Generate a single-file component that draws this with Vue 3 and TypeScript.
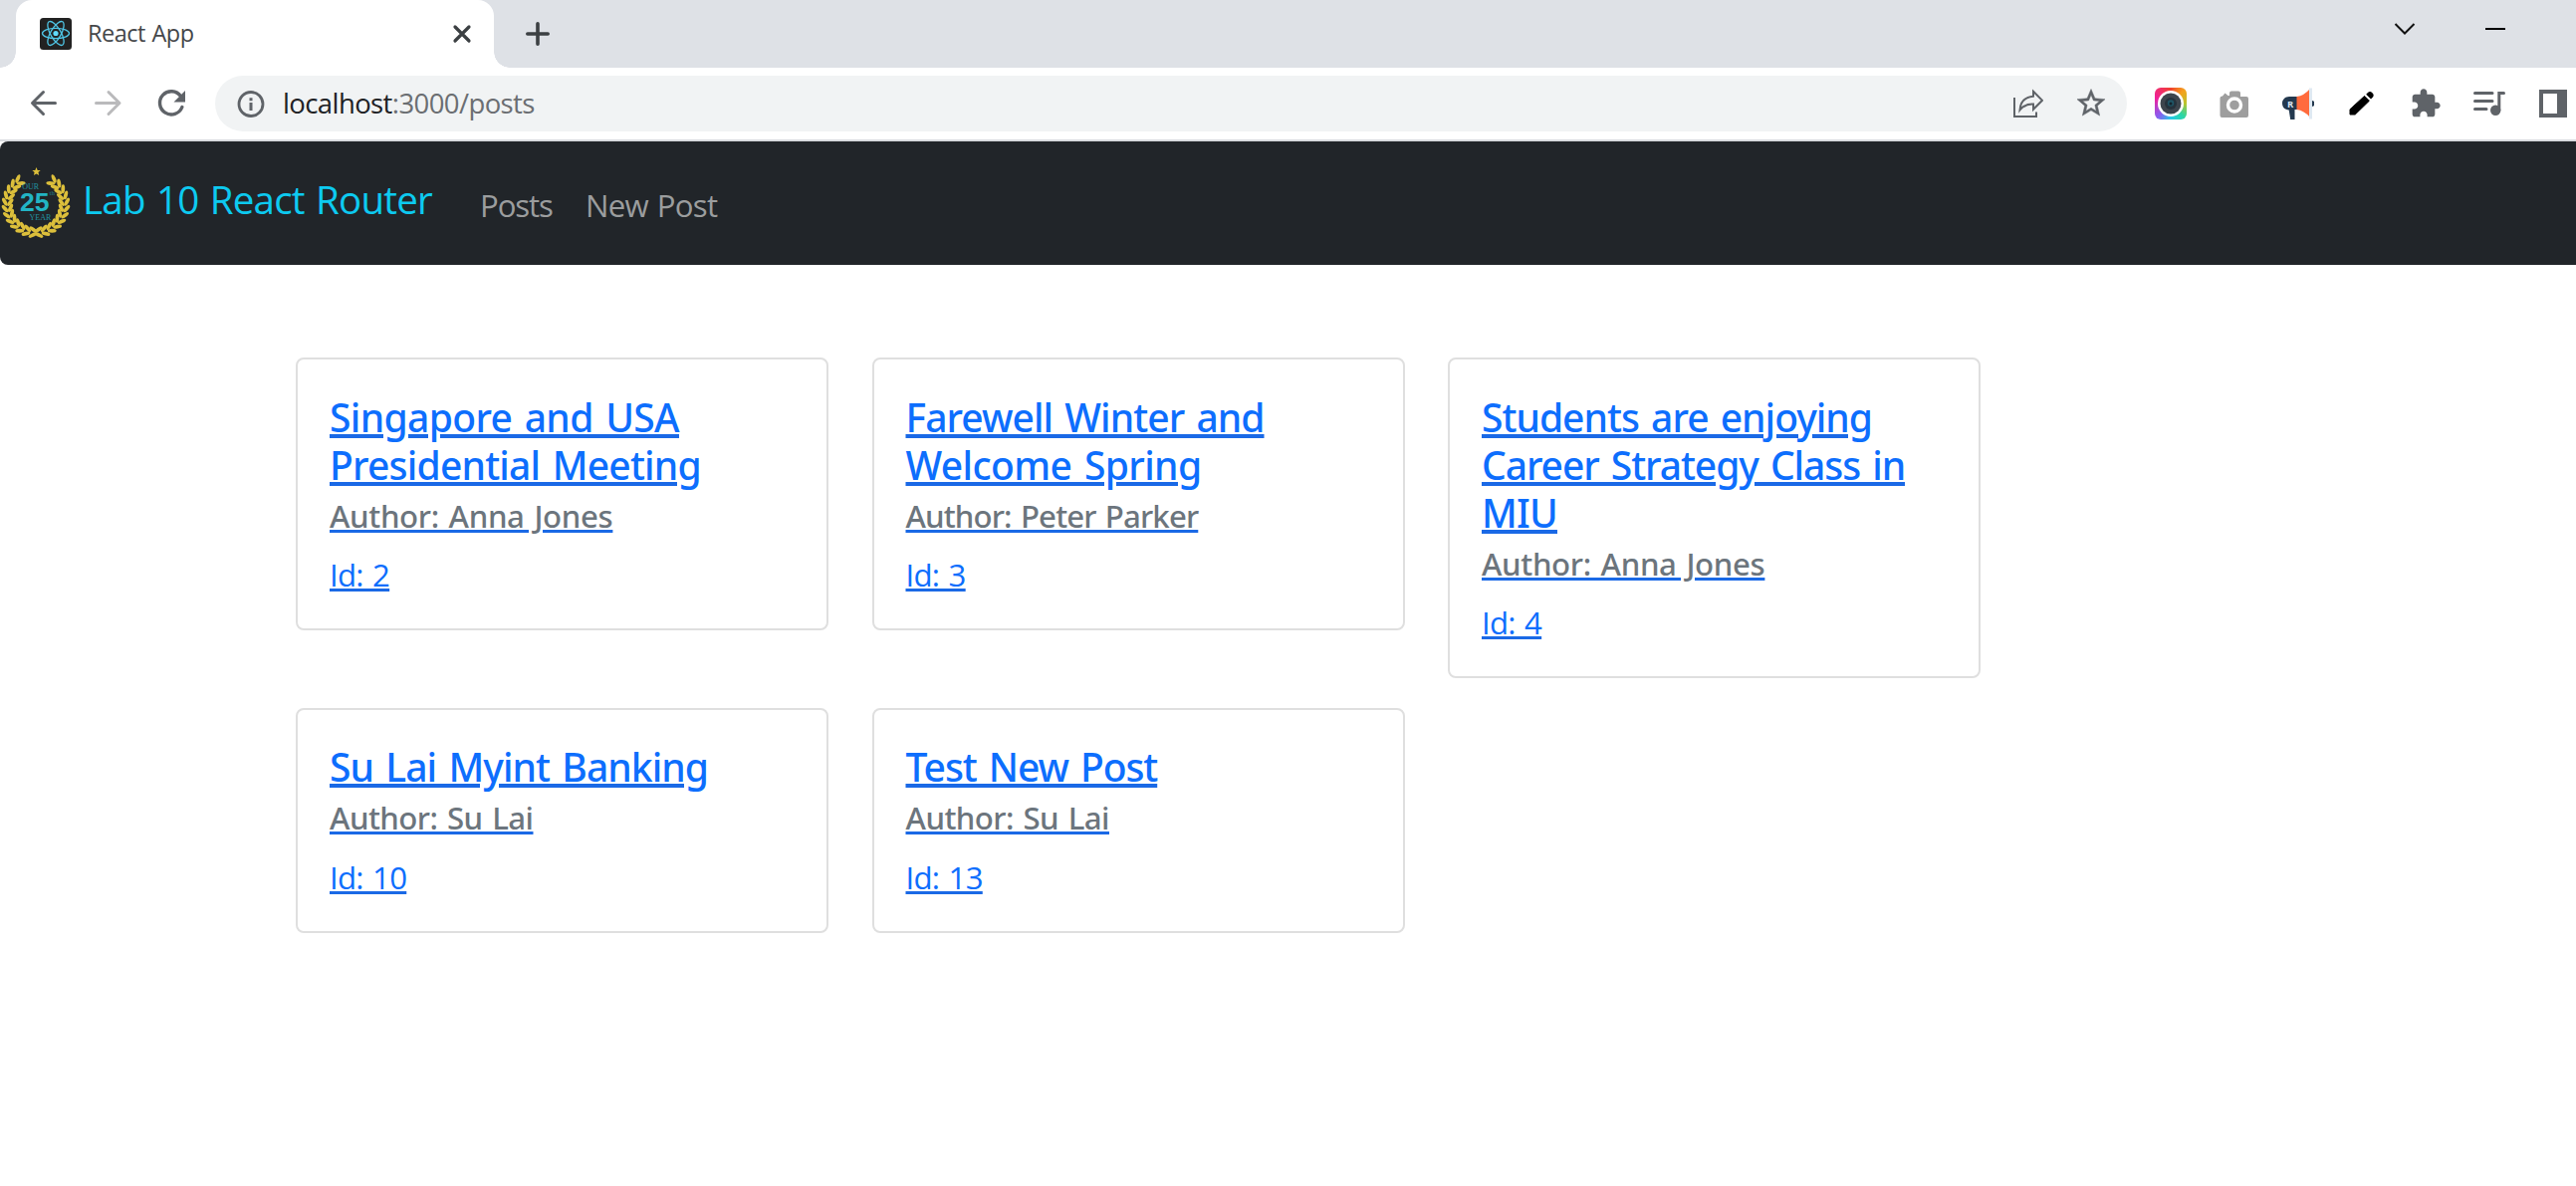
<script setup lang="ts">
interface Line {
  text: string
  tracking: number
}

interface Post {
  id: number
  title: Line[]
  author: Line
}

const posts: Post[] = [
  {
    id: 2,
    title: [
      { text: 'Singapore and USA', tracking: -0.65 },
      { text: 'Presidential Meeting', tracking: -0.78 },
    ],
    author: { text: 'Anna Jones', tracking: -0.34 },
  },
  {
    id: 3,
    title: [
      { text: 'Farewell Winter and', tracking: -0.94 },
      { text: 'Welcome Spring', tracking: -0.61 },
    ],
    author: { text: 'Peter Parker', tracking: -0.86 },
  },
  {
    id: 4,
    title: [
      { text: 'Students are enjoying', tracking: -0.98 },
      { text: 'Career Strategy Class in', tracking: -1.06 },
      { text: 'MIU', tracking: -0.8 },
    ],
    author: { text: 'Anna Jones', tracking: -0.34 },
  },
  {
    id: 10,
    title: [{ text: 'Su Lai Myint Banking', tracking: -0.92 }],
    author: { text: 'Su Lai', tracking: -0.54 },
  },
  {
    id: 13,
    title: [{ text: 'Test New Post', tracking: -1.07 }],
    author: { text: 'Su Lai', tracking: -0.54 },
  },
]

// Laurel wreath: pairs of leaves that climb both sides of a circle.
const leaves: string[] = []
for (let i = 0; i < 12; i++) {
  const deg = 84 - i * 12.6
  const rad = (deg * Math.PI) / 180
  for (const side of [1, -1]) {
    for (const lean of [1, -1]) {
      const r = 28.5 + lean * 2.8
      const x = 36 + side * r * Math.cos(rad)
      const y = 37 + r * Math.sin(rad)
      const dir = deg - 90 + lean * 32
      const angle = side === 1 ? dir : 180 - dir
      leaves.push(`translate(${x.toFixed(2)} ${y.toFixed(2)}) rotate(${angle.toFixed(1)})`)
    }
  }
}
</script>

<template>
  <div class="window">
    <div class="tabstrip">
      <div class="tab">
        <svg class="favicon" viewBox="0 0 32 32">
          <rect width="32" height="32" rx="3.5" fill="#222" />
          <g fill="none" stroke="#4fc4e4" stroke-width="1.3">
            <ellipse cx="16" cy="15.5" rx="13.5" ry="5.2" />
            <ellipse cx="16" cy="15.5" rx="13.5" ry="5.2" transform="rotate(60 16 15.5)" />
            <ellipse cx="16" cy="15.5" rx="13.5" ry="5.2" transform="rotate(120 16 15.5)" />
          </g>
          <circle cx="16" cy="15.5" r="2.6" fill="#61dafb" />
        </svg>
        <span class="tab-title">React App</span>
        <svg class="close" viewBox="0 0 20 20">
          <path d="M3 3l14 14M17 3L3 17" stroke="#3c4043" stroke-width="3.2" stroke-linecap="round" />
        </svg>
        <i class="foot"></i>
      </div>
      <svg class="plus" viewBox="0 0 24 24">
        <path d="M12 1.8v20.4M1.8 12h20.4" stroke="#3c4043" stroke-width="3.6" stroke-linecap="round" />
      </svg>
      <svg class="chevron" viewBox="0 0 22 12">
        <path d="M1.5 1l9.5 9.5L20.5 1" fill="none" stroke="#111" stroke-width="2" />
      </svg>
      <span class="minimize"></span>
    </div>

    <div class="toolbar">
      <div class="controls">
        <svg viewBox="0 0 32 32">
          <path d="M27.5 15.5H5M15.500 4.500l-11 11 11 11" class="arrow" />
        </svg>
        <svg viewBox="0 0 32 32">
          <path d="M4.500 15.500h23M17 4.500l11 11-11 11" class="arrow off" />
        </svg>
        <svg viewBox="0 0 32 32">
          <path d="M25.5 8.500a11.600 11.600 0 1 0 1.400 11" fill="none" stroke="#5f6368" stroke-width="3.400" stroke-linecap="round" />
          <path d="M30 3v11.500H18.500z" fill="#5f6368" />
        </svg>
      </div>
      <div class="omnibox">
        <svg viewBox="0 0 32 32">
          <circle cx="16" cy="16.5" r="12" fill="none" stroke="#5f6368" stroke-width="2.8" />
          <path d="M14.500 15h3v8h-3zM14.500 10.300h3v3h-3z" fill="#5f6368" />
        </svg>
        <span class="url"><b>localhost</b>:3000/posts</span>
        <svg class="share" viewBox="0 0 32 32">
          <g fill="none" stroke="#5f6368" stroke-width="2">
            <path d="M3 10v19h22v-4.5" />
            <path d="M22 3.800l9 9-9 9v-5.300c-6-.3-10 1.500-13.500 6C9 15 13 9.500 22 8.700z" />
          </g>
        </svg>
        <svg viewBox="0.57 0.93 22.86 22.86">
          <path
            fill="#5f6368"
            stroke="#5f6368"
            stroke-width="0.35"
            d="M22 9.240l-7.190-.62L12 2 9.190 8.630 2 9.240l5.460 4.730L5.820 21 12 17.270 18.180 21l-1.630-7.030L22 9.240zM12 15.400l-3.760 2.270 1-4.280-3.320-2.880 4.380-.38L12 6.100l1.710 4.040 4.380.38-3.320 2.880 1 4.280L12 15.400z"
          />
        </svg>
      </div>
      <div class="extensions">
        <span class="lens">
          <svg viewBox="0 0 32 32">
            <circle cx="16" cy="16" r="13" fill="#fff" />
            <circle cx="16" cy="16" r="10.5" fill="#3d454d" />
            <circle cx="16" cy="16" r="6" fill="#26323c" />
            <circle cx="16" cy="15.5" r="3.2" fill="#1f5566" />
            <circle cx="16" cy="16" r="1.5" fill="#15222b" />
          </svg>
        </span>
        <svg viewBox="0 0 32 32">
          <path fill="#9e9e9e" d="M4 8.500l2.500-3 3 2.500h1.500V5.500q0-2 2-2h7q2 0 2 2V9h6q2 0 2 2v17q0 2-2 2H3.500q-2 0-2-2V10.500q0-2 2.500-2z" />
          <circle cx="16" cy="17.500" r="6.500" fill="none" stroke="#fff" stroke-width="3.400" />
        </svg>
        <svg viewBox="0 0 32 32">
          <path fill="#24394f" d="M15 9v13h-2.500v10H8.200l-1.500-9.500C2.500 22 0 19.500 0 15.700S3 9 7 9z" />
          <circle cx="29.500" cy="16" r="3" fill="#24394f" />
          <path fill="#ff6b3d" d="M14.500 9Q22 8 27.500 1.500v28Q22 23 14.500 22z" />
          <path fill="#dfe9f2" d="M27 .5h3v31h-3z" />
          <text x="5" y="19.8" class="badge-letter">R</text>
        </svg>
        <svg viewBox="0 0 32 32">
          <path d="M4 27v-5.200L18.600 8.400l4.800 4.800L9.200 27z" stroke="#000" stroke-linejoin="round" />
          <path d="M20.200 6.800l2-2q2-1.700 4.200.4t.6 4.200l-2 2.200z" />
        </svg>
        <svg viewBox="0 0 24 24">
          <path
            fill="#5f6368"
            d="M20.500 11H19V7c0-1.100-.9-2-2-2h-4V3.500C13 2.120 11.880 1 10.500 1S8 2.120 8 3.500V5H4c-1.100 0-1.990.9-1.990 2v3.800H3.500c1.490 0 2.700 1.210 2.700 2.700s-1.210 2.700-2.700 2.700H2V20c0 1.100.9 2 2 2h3.800v-1.500c0-1.490 1.210-2.700 2.700-2.700 1.490 0 2.700 1.210 2.700 2.700V22H17c1.100 0 2-.9 2-2v-4h1.500c1.380 0 2.500-1.120 2.500-2.500S21.880 11 20.500 11z"
          />
        </svg>
        <svg viewBox="0 0 32 32">
          <path d="M1.500 5.500h17.500M1.500 13.500h17.500M1.500 21.500h11.500" stroke="#5f6368" stroke-width="3" stroke-linecap="round" />
          <path d="M25.800 23V5.500h4.700" fill="none" stroke="#5f6368" stroke-width="3" stroke-linecap="round" />
          <circle cx="22.2" cy="22.8" r="5.2" fill="#5f6368" />
        </svg>
        <svg viewBox="0 0 32 32">
          <path fill="#5f6368" fill-rule="evenodd" d="M2 2h28v28H2zM6 6v20h14V6z" />
        </svg>
      </div>
    </div>

    <nav class="navbar">
      <svg class="logo" viewBox="0 0 72 72">
        <g fill="#dcbf3b">
          <ellipse v-for="(t, i) in leaves" :key="i" :transform="t" rx="4.5" ry="1.9" />
          <path d="M36.500 0l1.200 2.900 3 .2-2.300 2 .8 3-2.700-1.600-2.600 1.600.7-3-2.300-2 3-.2z" />
        </g>
        <text x="22.3" y="21.5" class="small">OUR</text>
        <text x="20" y="44" class="years">25</text>
        <text x="49.5" y="27.500" class="th">th</text>
        <text x="29.5" y="52.500" class="small">YEAR</text>
      </svg>
      <span class="brand">Lab 10 React Router</span>
      <span class="link posts">Posts</span>
      <span class="link new">New Post</span>
    </nav>

    <main class="grid">
      <a v-for="post in posts" :key="post.id" class="card">
        <h5>
          <template v-for="(line, i) in post.title" :key="line.text">
            <br v-if="i > 0" /><span :style="{ letterSpacing: line.tracking + 'px' }">{{ line.text }}</span>
          </template>
        </h5>
        <h6 :style="{ letterSpacing: post.author.tracking + 'px' }">Author: {{ post.author.text }}</h6>
        <p>Id: {{ post.id }}</p>
      </a>
    </main>
  </div>
</template>

<style>
body {
  background: #fff;
}
</style>

<style scoped>
.window {
  height: 1191px;
  overflow: hidden;
  background: #fff;
  font-family: 'Open Sans', 'Noto Sans', sans-serif;
}
svg {
  display: block;
  flex: none;
}
.tabstrip {
  display: flex;
  align-items: center;
  height: 68px;
  background: #dee1e6;
}
.tab {
  position: relative;
  display: flex;
  align-items: center;
  box-sizing: border-box;
  width: 480px;
  height: 68px;
  margin-left: 16px;
  padding: 0 22px 0 24px;
  border-radius: 16px 16px 0 0;
  background: #fff;
}
.tab::before,
.foot {
  content: '';
  position: absolute;
  bottom: 0;
  width: 16px;
  height: 16px;
}
.tab::before {
  left: -16px;
  background: radial-gradient(circle at 0 0, transparent 15.5px, #fff 16px);
}
.foot {
  right: -16px;
  background: radial-gradient(circle at 100% 0, transparent 15.5px, #fff 16px);
}
.favicon {
  width: 32px;
  height: 32px;
}
.tab-title {
  margin: 0 0 2px 16px;
  font-size: 23.5px;
  letter-spacing: -0.5px;
  word-spacing: 1px;
  color: #45474a;
}
.close {
  width: 20px;
  height: 20px;
  margin-left: auto;
}
.plus {
  width: 24px;
  height: 24px;
  margin-left: 32px;
}
.chevron {
  width: 22px;
  height: 12px;
  margin: 0 0 10px auto;
}
.minimize {
  width: 20px;
  height: 2px;
  margin: 0 71px 10px 70px;
  background: #000;
}
.toolbar {
  display: flex;
  align-items: center;
  height: 72px;
  border-bottom: 2px solid #d9dbdf;
}
.toolbar svg {
  width: 32px;
  height: 32px;
}
.controls {
  display: flex;
  gap: 32px;
  padding-left: 28px;
}
.arrow {
  fill: none;
  stroke: #5f6368;
  stroke-width: 3;
  stroke-linecap: round;
  stroke-linejoin: round;
}
.arrow.off {
  stroke: #bababc;
}
.omnibox {
  display: flex;
  align-items: center;
  box-sizing: border-box;
  width: 1920px;
  height: 56px;
  margin: 0 28px;
  padding: 0 20px;
  border-radius: 28px;
  background: #f1f3f4;
}
.url {
  margin: 0 0 1px 16px;
  font-size: 27.5px;
  letter-spacing: -0.6px;
  color: #6b6e72;
}
.url b {
  font-weight: 400;
  color: #202124;
}
.share {
  margin: 0 32px 0 auto;
}
.extensions {
  display: flex;
  gap: 32px;
}
.lens {
  width: 32px;
  height: 32px;
  border-radius: 6px;
  background: conic-gradient(from 0deg, #f0412e, #f5a11c 45deg, #b9c52c 90deg, #2bd6a4 135deg, #25c9e8 180deg, #8a5cf0 225deg, #f01f9b 290deg, #f0412e);
}
.badge-letter {
  font: 700 9.5px 'Open Sans', sans-serif;
  fill: #dbe6f0;
}
.navbar {
  display: flex;
  align-items: center;
  height: 124px;
  border-radius: 8px 0 0 8px;
  background: #212529;
}
.logo {
  width: 72px;
  height: 72px;
}
.logo text {
  fill: #22b4c4;
}
.small {
  font: 8px 'Liberation Serif', serif;
  opacity: 0.75;
}
.th {
  font: 7px 'Liberation Serif', serif;
  opacity: 0.6;
}
.years {
  font: 700 26.5px 'Liberation Sans', sans-serif;
}
.brand {
  width: 401px;
  margin: 0 0 9px 11px;
  font-size: 38.5px;
  line-height: 60px;
  letter-spacing: -0.77px;
  word-spacing: 2px;
  white-space: nowrap;
  color: #0dcaf0;
}
.link {
  margin-top: 3px;
  font-size: 31.2px;
  line-height: 48px;
  color: #9b9d9e;
}
.posts {
  width: 106px;
  margin-left: -2px;
  letter-spacing: -1.1px;
}
.new {
  letter-spacing: -0.75px;
  word-spacing: 1.5px;
}
.grid {
  display: grid;
  grid-template-columns: repeat(3, 535px);
  column-gap: 43.5px;
  row-gap: 30px;
  align-items: start;
  margin: 93px 0 0 297px;
}
.card {
  padding: 33.5px 32px 30px;
  border: 2px solid #dfdfdf;
  border-radius: 8px;
  color: #0d6efd;
}
h5,
h6,
p {
  margin: 0;
  text-decoration: underline #1a69e6;
  white-space: nowrap;
}
h5 {
  margin-bottom: 8px;
  font: 500 39px/48px 'Noto Sans', sans-serif;
  word-spacing: 3px;
  text-decoration-thickness: 4px;
  text-underline-offset: 2px;
}
h6 {
  margin-bottom: 16px;
  font: 500 31.2px/38.4px 'Noto Sans', sans-serif;
  word-spacing: 2px;
  color: #6c757d;
  text-decoration-thickness: 3px;
  text-underline-offset: 2px;
}
p {
  font-size: 31.2px;
  line-height: 48px;
  letter-spacing: -0.75px;
  word-spacing: 2px;
  text-decoration-thickness: 3px;
  text-underline-offset: 2px;
}
</style>
